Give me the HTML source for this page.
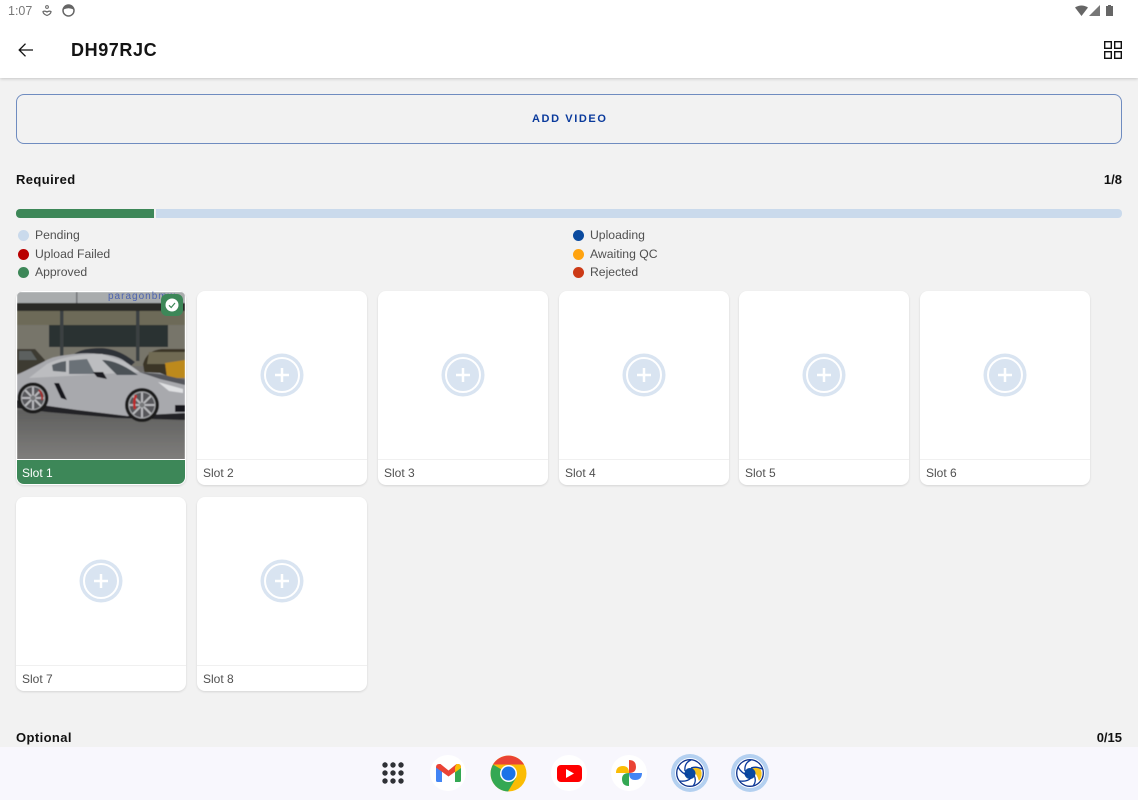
<!DOCTYPE html>
<html><head><meta charset="utf-8"><style>
*{box-sizing:border-box}
html,body{margin:0;padding:0}
body{width:1138px;height:800px;overflow:hidden;background:#f2f2f2;position:relative;font-family:"Liberation Sans",sans-serif}
.a{position:absolute}
.t{position:absolute;white-space:nowrap}
.h{font-weight:bold;font-size:13px;color:#111;letter-spacing:.4px}
.lg{font-size:12.2px;color:#505050;line-height:16px}
.dot{position:absolute;width:11px;height:11px;border-radius:50%}
.card{position:absolute;width:170px;height:194px;background:#fff;border-radius:8px;box-shadow:0 1px 2px rgba(0,0,0,.12)}
.card .ln{position:absolute;left:0;right:0;top:168px;height:1px;background:#f0f0f0}
.card .lb{position:absolute;left:6px;top:175px;font-size:12px;color:#505050;line-height:15px}
.card svg{position:absolute;left:63px;top:62px}
.dock{position:absolute;border-radius:50%;background:#fff;width:36px;height:36px}
</style></head><body>
<div class="a" style="left:0;top:0;width:1138px;height:78px;background:#fff;box-shadow:0 1px 3px rgba(0,0,0,.18)"></div>
<div class="t" style="left:8px;top:4px;font-size:12.5px;color:#777;line-height:15px">1:07</div>
<svg class="a" style="left:42px;top:5px" width="11" height="12" viewBox="0 0 11 12"><circle cx="5" cy="2" r="1.400" fill="none" stroke="#666" stroke-width="1"/><path d="M1 6.500Q3 5.500 5 7 7 5.500 9 6.500 9 9 5 10.500 1 9 1 6.500z" fill="none" stroke="#666" stroke-width="1.200"/></svg>
<svg class="a" style="left:62px;top:4px" width="13" height="13" viewBox="0 0 13 13"><circle cx="6.500" cy="6.500" r="5.500" fill="#fff" stroke="#666" stroke-width="1.500"/><path d="M1.500 5.500Q6.500 3 11.500 5.500L11 3 6.500 1 2 3z" fill="#666"/></svg>
<svg class="a" style="left:1075px;top:5px" width="13" height="11" viewBox="0 0 13 11"><path d="M0 2.500Q6.500-1.500 13 2.500L6.500 11z" fill="#666"/></svg>
<svg class="a" style="left:1089px;top:5px" width="11" height="11" viewBox="0 0 11 11"><path d="M11 0V11H0z" fill="#777"/></svg>
<svg class="a" style="left:1106px;top:5px" width="7" height="11" viewBox="0 0 7 11"><path d="M2 0h3v1H7v10H0V1h2z" fill="#666"/></svg>
<svg class="a" style="left:18px;top:43px" width="15" height="14" viewBox="0 0 15 14"><path d="M15 7H1M7.500.7 1.200 7l6.300 6.300" fill="none" stroke="#111" stroke-width="1.300"/></svg>
<div class="t" style="left:71px;top:40px;font-size:18px;font-weight:bold;color:#141414;line-height:21px;letter-spacing:.6px">DH97RJC</div>
<svg class="a" style="left:1104px;top:41px" width="18" height="18" viewBox="0 0 18 18" fill="none" stroke="#111" stroke-width="1.400"><rect x=".7" y=".7" width="6.600" height="6.600"/><rect x="10.700" y=".7" width="6.600" height="6.600"/><rect x=".7" y="10.700" width="6.600" height="6.600"/><rect x="10.700" y="10.700" width="6.600" height="6.600"/></svg>

<div class="a" style="left:16px;top:94px;width:1106px;height:50px;border:1px solid #6f8cc0;border-radius:8px"></div>
<div class="t" style="left:532px;top:112px;font-size:11px;font-weight:bold;color:#0a3a9c;letter-spacing:1.6px;line-height:14px">ADD VIDEO</div>

<div class="t h" style="left:16px;top:172px;line-height:15px">Required</div>
<div class="t h" style="right:16px;top:172px;line-height:15px;letter-spacing:0">1/8</div>
<div class="a" style="left:16px;top:209px;width:138px;height:9px;background:#3d8758;border-radius:4px 0 0 4px"></div>
<div class="a" style="left:156px;top:209px;width:966px;height:9px;background:#cadaec;border-radius:0 4px 4px 0"></div>

<div class="dot" style="left:18px;top:230px;background:#cadaec"></div><div class="t lg" style="left:35px;top:227px">Pending</div>
<div class="dot" style="left:18px;top:249px;background:#b90000"></div><div class="t lg" style="left:35px;top:246px">Upload Failed</div>
<div class="dot" style="left:18px;top:267px;background:#3d8758"></div><div class="t lg" style="left:35px;top:264px">Approved</div>
<div class="dot" style="left:573px;top:230px;background:#0a4a9f"></div><div class="t lg" style="left:590px;top:227px">Uploading</div>
<div class="dot" style="left:573px;top:249px;background:#ffa30f"></div><div class="t lg" style="left:590px;top:246px">Awaiting QC</div>
<div class="dot" style="left:573px;top:267px;background:#cc3a16"></div><div class="t lg" style="left:590px;top:264px">Rejected</div>

<!-- Slot 1 -->
<div class="a" style="left:16px;top:291px;width:170px;height:194px;background:#fff;border-radius:8px;box-shadow:0 1px 2px rgba(0,0,0,.12);overflow:hidden">
<svg class="a" style="left:1px;top:1px" width="168" height="167" viewBox="0 0 168 167">
<defs><filter id="b" x="-5%" y="-5%" width="110%" height="110%"><feGaussianBlur stdDeviation=".55"/></filter>
<linearGradient id="r" x1="0" y1="0" x2="0" y2="1"><stop offset="0" stop-color="#5f5f5e"/><stop offset="1" stop-color="#7f7e7c"/></linearGradient></defs>
<g filter="url(#b)">
<rect width="168" height="168" fill="#6f6e6c"/>
<rect width="168" height="12" fill="#a9acad"/>
<rect x="59" width="1.500" height="12" fill="#6f7274"/>
<rect y="11" width="168" height="8" fill="#2b2a28"/>
<rect y="19" width="168" height="55" fill="#77756a"/>
<rect x="0" y="19" width="168" height="14" fill="#6d6b58"/>
<rect x="32" y="33" width="119" height="22" fill="#2b3130"/>
<rect x="43" y="19" width="3.500" height="52" fill="#3a3f42"/><rect x="119" y="19" width="3.500" height="50" fill="#3a3f42"/>
<path d="M0 57 18 57 28 68 28 72 0 82z" fill="#3d3a33"/><path d="M2 59H14L20 68H2z" fill="#5c605f"/>
<path d="M55 64Q62 56 85 56 102 57 118 70L112 76H50z" fill="#2f3237"/>
<path d="M126 72Q130 58 145 57H168V84H128z" fill="#3a3426"/><path d="M132 60H168V72H130z" fill="#6f6a52"/><path d="M148 71 168 68V86H150z" fill="#bd8a1f"/>
<rect y="118" width="168" height="50" fill="url(#r)"/>
<path d="M0 106 60 112 168 118V128L100 126 30 120 0 116z" fill="#232325"/>
<path d="M0 83 26 70Q36 64 50 63 68 60 83 62 98 63 106 68L123 80 143 81 168 91V121L110 124 60 118 3 110 0 108z" fill="#a8a9ad"/>
<path d="M30 72Q50 62 85 62L108 70 122 80 50 84 12 86z" fill="#bcbdc0"/>
<path d="M35 73Q42 70 49 69V80L36 79z" fill="#5a6066"/>
<path d="M52 68.500 70 67 78 82H52z" fill="#6b7177"/>
<path d="M85 68Q100 68 121 83L100 83z" fill="#4c5157"/>
<path d="M76 80H86L90 87 80 85z" fill="#1e1e20"/>
<path d="M37 91H42L50 108 44 106z" fill="#18181a"/>
<path d="M141 90 166 97V101L152 99z" fill="#dfe0e2"/>
<path d="M122 80 143 82 168 88V93L143 87z" fill="#55575b"/>
<rect x="158" y="113" width="10" height="7" fill="#17171a"/>
<g fill="none">
<circle cx="16" cy="106" r="15.500" fill="#1b1b1d"/><circle cx="16" cy="106" r="11.500" fill="#56575a"/>
<path d="M16 94.500V117.500M4.500 106H27.500M8 98 24 114M24 98 8 114" stroke="#b7b8bb" stroke-width="2"/><circle cx="16" cy="106" r="11.500" stroke="#a5a6a9" stroke-width="1.200"/><circle cx="16" cy="106" r="2.500" fill="#77787a"/>
<path d="M22 98Q26 102 25 108" stroke="#a62a2a" stroke-width="2"/>
<circle cx="125" cy="113" r="17" fill="#1b1b1d"/><circle cx="125" cy="113" r="13" fill="#56575a"/>
<path d="M125 100V126M112 113H138M116 104 134 122M134 104 116 122" stroke="#b7b8bb" stroke-width="2"/><circle cx="125" cy="113" r="13" stroke="#a5a6a9" stroke-width="1.200"/><circle cx="125" cy="113" r="2.500" fill="#77787a"/>
<path d="M119 103Q116 110 118 117" stroke="#c02a2a" stroke-width="2.500"/>
</g>
</g>
</svg>
<div class="a" style="left:1px;top:169px;width:168px;height:24px;background:#3d8758;border-radius:0 0 7px 7px"></div>
<div class="t" style="left:6px;top:175px;font-size:12px;color:#fff;line-height:15px">Slot 1</div>
<div class="t" style="left:92px;top:1px;font-size:10px;color:#4c63b0;letter-spacing:1px;line-height:9px">paragonbmw</div>
<div class="a" style="left:145px;top:3px;width:22px;height:22px;background:#3d8758;border-radius:6px"></div>
<svg class="a" style="left:149px;top:7px" width="14" height="14" viewBox="0 0 14 14"><circle cx="7" cy="7" r="6.500" fill="#fff"/><path d="M4 7.300 6.200 9.500 10 5" fill="none" stroke="#3d8758" stroke-width="1.200"/></svg>
</div>

<div class="card" style="left:197px;top:291px"><svg width="44" height="44" viewBox="0 0 44 44"><circle cx="22" cy="22" r="21.500" fill="#d9e4f1"/><circle cx="22" cy="22" r="17" fill="#d9e4f1" stroke="#fff" stroke-width="2"/><path d="M22 15V29M15 22H29" stroke="#fff" stroke-width="2.500"/></svg><div class="ln"></div><div class="lb">Slot 2</div></div>
<div class="card" style="left:378px;top:291px"><svg width="44" height="44" viewBox="0 0 44 44"><circle cx="22" cy="22" r="21.500" fill="#d9e4f1"/><circle cx="22" cy="22" r="17" fill="#d9e4f1" stroke="#fff" stroke-width="2"/><path d="M22 15V29M15 22H29" stroke="#fff" stroke-width="2.500"/></svg><div class="ln"></div><div class="lb">Slot 3</div></div>
<div class="card" style="left:559px;top:291px"><svg width="44" height="44" viewBox="0 0 44 44"><circle cx="22" cy="22" r="21.500" fill="#d9e4f1"/><circle cx="22" cy="22" r="17" fill="#d9e4f1" stroke="#fff" stroke-width="2"/><path d="M22 15V29M15 22H29" stroke="#fff" stroke-width="2.500"/></svg><div class="ln"></div><div class="lb">Slot 4</div></div>
<div class="card" style="left:739px;top:291px"><svg width="44" height="44" viewBox="0 0 44 44"><circle cx="22" cy="22" r="21.500" fill="#d9e4f1"/><circle cx="22" cy="22" r="17" fill="#d9e4f1" stroke="#fff" stroke-width="2"/><path d="M22 15V29M15 22H29" stroke="#fff" stroke-width="2.500"/></svg><div class="ln"></div><div class="lb">Slot 5</div></div>
<div class="card" style="left:920px;top:291px"><svg width="44" height="44" viewBox="0 0 44 44"><circle cx="22" cy="22" r="21.500" fill="#d9e4f1"/><circle cx="22" cy="22" r="17" fill="#d9e4f1" stroke="#fff" stroke-width="2"/><path d="M22 15V29M15 22H29" stroke="#fff" stroke-width="2.500"/></svg><div class="ln"></div><div class="lb">Slot 6</div></div>
<div class="card" style="left:16px;top:497px"><svg width="44" height="44" viewBox="0 0 44 44"><circle cx="22" cy="22" r="21.500" fill="#d9e4f1"/><circle cx="22" cy="22" r="17" fill="#d9e4f1" stroke="#fff" stroke-width="2"/><path d="M22 15V29M15 22H29" stroke="#fff" stroke-width="2.500"/></svg><div class="ln"></div><div class="lb">Slot 7</div></div>
<div class="card" style="left:197px;top:497px"><svg width="44" height="44" viewBox="0 0 44 44"><circle cx="22" cy="22" r="21.500" fill="#d9e4f1"/><circle cx="22" cy="22" r="17" fill="#d9e4f1" stroke="#fff" stroke-width="2"/><path d="M22 15V29M15 22H29" stroke="#fff" stroke-width="2.500"/></svg><div class="ln"></div><div class="lb">Slot 8</div></div>

<div class="t h" style="left:16px;top:730px;line-height:15px">Optional</div>
<div class="t h" style="right:16px;top:730px;line-height:15px;letter-spacing:0">0/15</div>

<div class="a" style="left:0;top:747px;width:1138px;height:53px;background:#f8f7fd"></div>
<svg class="a" style="left:382px;top:762px" width="22" height="22" viewBox="0 0 22 22" fill="#2f3136"><circle cx="3" cy="3" r="2.700"/><circle cx="11" cy="3" r="2.700"/><circle cx="19" cy="3" r="2.700"/><circle cx="3" cy="11" r="2.700"/><circle cx="11" cy="11" r="2.700"/><circle cx="19" cy="11" r="2.700"/><circle cx="3" cy="19" r="2.700"/><circle cx="11" cy="19" r="2.700"/><circle cx="19" cy="19" r="2.700"/></svg>
<div class="dock" style="left:430px;top:755px"></div>
<svg class="a" style="left:436px;top:764px" width="25" height="18" viewBox="0 0 25 18"><path d="M0 3V16.500Q0 18 1.500 18H6V7z" fill="#4285f4"/><path d="M25 3V16.500Q25 18 23.500 18H19V7z" fill="#34a853"/><path d="M0 3.500Q0 0 3 0H4.500L12.500 6.500 20.500 0H22Q25 0 25 3.500L12.500 12.500z" fill="#ea4335"/><path d="M19 3.200 20.500 0H22Q25 0 25 3.500V4L19 8.500z" fill="#fbbc04"/></svg>
<svg class="a" style="left:490px;top:755px" width="37" height="37" viewBox="0 0 37 37"><circle cx="18.500" cy="18.500" r="18" fill="#fbbc04"/><path d="M3 9.500A18 18 0 0 1 34 9.500H18.500z" fill="#ea4335"/><path d="M3 9.500A18 18 0 0 0 18 36.500L26 23z" fill="#34a853"/><circle cx="18.500" cy="18.500" r="8.500" fill="#fff"/><circle cx="18.500" cy="18.500" r="7" fill="#1a73e8"/></svg>
<div class="dock" style="left:551px;top:755px"></div>
<div class="a" style="left:557px;top:765px;width:25px;height:17px;background:#f00;border-radius:4px"></div>
<svg class="a" style="left:566px;top:769px" width="8" height="9" viewBox="0 0 8 9"><path d="M0 0 8 4.500 0 9z" fill="#fff"/></svg>
<div class="dock" style="left:611px;top:755px"></div>
<svg class="a" style="left:616px;top:760px" width="26" height="26" viewBox="0 0 26 26"><path d="M13 13V0Q20 0 20 7 20 13 13 13z" fill="#ea4335"/><path d="M13 13H26Q26 20 19 20 13 20 13 13z" fill="#4285f4"/><path d="M13 13V26Q6 26 6 19 6 13 13 13z" fill="#34a853"/><path d="M13 13H0Q0 6 7 6 13 6 13 13z" fill="#fbbc04"/></svg>
<svg class="a" style="left:671px;top:754px" width="38" height="38" viewBox="0 0 38 38"><circle cx="19" cy="19" r="19" fill="#b4d0f0"/><circle cx="19" cy="19" r="15" fill="#fff"/><circle cx="19" cy="19" r="13.300" fill="#fff" stroke="#0a2f8a" stroke-width="1.300"/><path d="M20 14Q27 12 30 16 32 22 28 27 26 20 20 14z" fill="#f6c21c"/><circle cx="19" cy="19.500" r="5.500" fill="#0a4a9f"/><path d="M20 6Q13 9 14 17M7 13Q11 20 17 21M9 27Q16 28 20 24M22 32Q26 27 23 21M31 15Q25 12 20 14" fill="none" stroke="#0a3a9c" stroke-width="1.300"/></svg>
<svg class="a" style="left:731px;top:754px" width="38" height="38" viewBox="0 0 38 38"><circle cx="19" cy="19" r="19" fill="#b4d0f0"/><circle cx="19" cy="19" r="15" fill="#fff"/><circle cx="19" cy="19" r="13.300" fill="#fff" stroke="#0a2f8a" stroke-width="1.300"/><path d="M20 14Q27 12 30 16 32 22 28 27 26 20 20 14z" fill="#f6c21c"/><circle cx="19" cy="19.500" r="5.500" fill="#0a4a9f"/><path d="M20 6Q13 9 14 17M7 13Q11 20 17 21M9 27Q16 28 20 24M22 32Q26 27 23 21M31 15Q25 12 20 14" fill="none" stroke="#0a3a9c" stroke-width="1.300"/></svg>
</body></html>
